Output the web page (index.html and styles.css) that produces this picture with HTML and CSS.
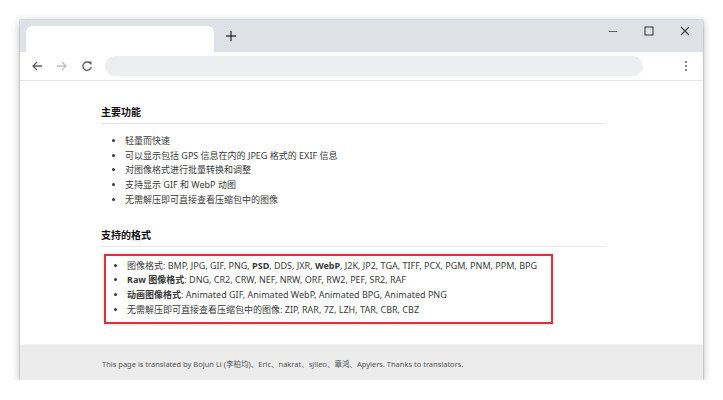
FILE: index.html
```html
<!DOCTYPE html>
<html lang="zh-CN">
<head>
    <meta charset="UTF-8">
    <title>ImageGlass</title>
    <link rel="stylesheet" href="styles.css">
</head>
<body>
    <div class="window">
        <div class="tabstrip">
            <div class="tab"></div>
            <svg class="newtab" width="12" height="12" viewBox="0 0 12 12"><path d="M6 1v10M1 6h10" stroke="#3c4043" stroke-width="1.4"/></svg>
            <div class="winctl">
                <svg width="10" height="10" viewBox="0 0 10 10"><path d="M1 5.5h8" stroke="#5f6368" stroke-width="1"/></svg>
                <svg width="10" height="10" viewBox="0 0 10 10"><rect x="1" y="1" width="8" height="8" fill="none" stroke="#3c4043" stroke-width="1.1"/></svg>
                <svg width="10" height="10" viewBox="0 0 10 10"><path d="M1 1l8 8M9 1l-8 8" stroke="#3c4043" stroke-width="1.1"/></svg>
            </div>
        </div>
        <div class="toolbar">
            <svg class="nav" width="12" height="12" viewBox="0 0 12 12"><path d="M11 6H2M6 2L2 6l4 4" fill="none" stroke="#5f6368" stroke-width="1.3"/></svg>
            <svg class="nav" width="12" height="12" viewBox="0 0 12 12"><path d="M1 6h9M6 2l4 4-4 4" fill="none" stroke="#bdc1c6" stroke-width="1.3"/></svg>
            <svg class="nav" width="12" height="12" viewBox="0 0 12 12"><path d="M9.8 4.2A4.2 4.2 0 1 0 10.2 7" fill="none" stroke="#5f6368" stroke-width="1.4"/><path d="M7 1.5h3.5V5z" fill="#5f6368"/></svg>
            <div class="omnibox"></div>
            <svg class="menu" width="4" height="12" viewBox="0 0 4 12"><circle cx="2" cy="2" r="1.1" fill="#5f6368"/><circle cx="2" cy="6" r="1.1" fill="#5f6368"/><circle cx="2" cy="10" r="1.1" fill="#5f6368"/></svg>
        </div>
        <div class="page">
            <div class="content">
                <h2>主要功能</h2>
                <ul class="features">
                    <li>轻量而快速</li>
                    <li>可以显示包括 GPS 信息在内的 JPEG 格式的 EXIF 信息</li>
                    <li>对图像格式进行批量转换和调整</li>
                    <li>支持显示 GIF 和 WebP 动图</li>
                    <li>无需解压即可直接查看压缩包中的图像</li>
                </ul>
                <h2 class="second">支持的格式</h2>
                <ul class="formats">
                    <li>图像格式: BMP, JPG, GIF, PNG, <b>PSD</b>, DDS, JXR, <b>WebP</b>, J2K, JP2, TGA, TIFF, PCX, PGM, PNM, PPM, BPG</li>
                    <li><b>Raw 图像格式</b>: DNG, CR2, CRW, NEF, NRW, ORF, RW2, PEF, SR2, RAF</li>
                    <li><b>动画图像格式</b>: Animated GIF, Animated WebP, Animated BPG, Animated PNG</li>
                    <li>无需解压即可直接查看压缩包中的图像: ZIP, RAR, 7Z, LZH, TAR, CBR, CBZ</li>
                </ul>
            </div>
        </div>
        <div class="footer">
            This page is translated by Bojun Li (李柏均)、Eric、nakrat、sjlleo、章鸿、Apylers. Thanks to translators.
        </div>
    </div>
</body>
</html>
```

FILE: styles.css
```css
body {
    margin: 0;
    background-color: #ffffff;
    font-family: "Noto Sans", "Noto Sans CJK SC", sans-serif;
}

.window {
    margin: 20px 0 0 20px;
    width: 683px;
    height: 360px;
    display: flex;
    flex-direction: column;
    background-color: white;
    box-shadow: 0 2px 8px rgba(0,0,0,0.3), 0 0 1px rgba(0,0,0,0.5);
    overflow: hidden;
}

.tabstrip {
    height: 32px;
    background-color: #dee1e6;
    display: flex;
    align-items: flex-end;
    flex-shrink: 0;
}

.tab {
    width: 188px;
    height: 26px;
    margin-left: 6px;
    background-color: white;
    border-radius: 6px 6px 0 0;
}

.newtab {
    align-self: center;
    margin-left: 11px;
}

.winctl {
    margin-left: auto;
    align-self: flex-start;
    display: flex;
    gap: 26px;
    padding: 6px 13px 0 0;
}

.toolbar {
    height: 28px;
    display: flex;
    align-items: center;
    padding: 0 0 0 11px;
    border-bottom: 1px solid #e3e4e6;
    flex-shrink: 0;
}

.nav {
    margin-right: 13px;
}

.omnibox {
    width: 538px;
    height: 20px;
    margin-left: -1px;
    background-color: #eceef0;
    border-radius: 10px;
}

.menu {
    margin-left: 41px;
}

.page {
    flex: 1;
}

.content {
    width: 506px;
    margin-left: 81px;
    padding-top: 24px;
}

h2 {
    font-size: 10px;
    font-weight: bold;
    line-height: 14px;
    color: #111;
    margin: 0;
    padding-bottom: 4px;
    border-bottom: 1px solid #e8e8e8;
}

h2.second {
    margin-top: 20px;
}

ul {
    margin: 10px 0 0 0;
    padding: 0 0 0 24px;
    font-size: 9px;
    line-height: 14.7px;
    color: #3a3a3a;
}

li::marker {
    font-size: 8px;
}

.formats {
    margin-top: 7px;
    width: 424px;
    margin-left: 3px;
    padding: 3px 0 5px 21px;
    border: 2px solid #d8333f;
    box-shadow: 0 0 2px rgba(216,51,63,0.4);
}

.footer {
    height: 35px;
    background-color: #ececec;
    border-top: 1px solid #f2f2f2;
    font-size: 7.5px;
    line-height: 38px;
    color: #555;
    padding-left: 82px;
    flex-shrink: 0;
}
```
